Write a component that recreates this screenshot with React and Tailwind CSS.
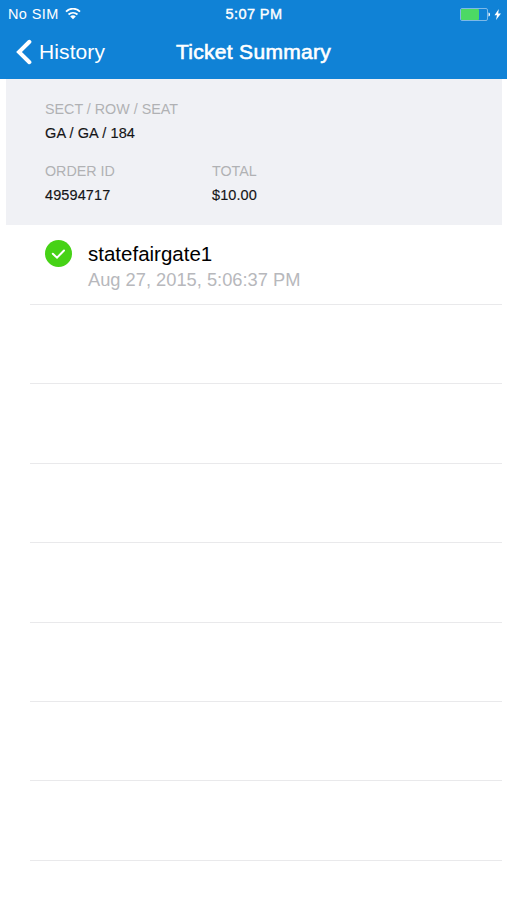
import React from 'react';

const emptyRows = [1, 2, 3, 4, 5, 6, 7];

const WifiIcon = () => (
  <svg className="w-4 h-3" viewBox="0 0 16 12" fill="none" stroke="white" strokeWidth="1.8">
    <path d="M1 3.7C5 -0.3 11 -0.3 15 3.7" />
    <path d="M3.5 6.5C6.1 4.2 9.9 4.2 12.5 6.5" />
    <path d="M5.2 8.4L8 11.2L10.8 8.4C9.2 7 6.8 7 5.2 8.4Z" fill="white" stroke="none" />
  </svg>
);

const BatteryIcon = () => (
  <svg className="w-[42px] h-[13px]" viewBox="0 0 42 13">
    <rect x="0.5" y="0.5" width="27" height="12" rx="1.5" fill="none" stroke="#7db9e8" />
    <rect x="1" y="1" width="18" height="11" rx="1" fill="#4cd964" />
    <path d="M28.5 4.5C30.5 5 30.5 8 28.5 8.5Z" fill="white" />
    <path d="M38.8 1L34.5 7.2H37L36 12L41 5.4H38.2Z" fill="white" />
  </svg>
);

const Field = ({ label, value }) => (
  <div>
    <p className="text-[#b0b1b4] text-[14.3px] leading-4">{label}</p>
    <p className="text-[#151517] text-[14.5px] leading-4 mt-2 tracking-[0.1px] [-webkit-text-stroke:0.15px]">{value}</p>
  </div>
);

const App = () => {
  return (
    <div className="w-[507px] h-[900px] bg-white overflow-hidden font-['Liberation_Sans',Arial,sans-serif]">
      <header className="h-[79px] bg-[#1082d6] text-white">
        <div className="h-7 grid grid-cols-[165px_162px_1fr] items-center pl-2 pr-[5px] text-[14.5px]">
          <div className="flex items-center gap-1.5">
            <span className="leading-5 tracking-[0.4px]">No SIM</span>
            <WifiIcon />
          </div>
          <span className="leading-5 text-center tracking-[0.4px] [-webkit-text-stroke:0.4px]">5:07 PM</span>
          <div className="flex justify-end">
            <BatteryIcon />
          </div>
        </div>
        <div className="h-12 grid grid-cols-[160px_1fr_160px] items-center">
          <button className="flex items-center gap-[7px] pl-4 text-[21px]">
            <svg className="w-4 h-[26px]" viewBox="0 0 16 26" fill="none" stroke="white" strokeWidth="4" strokeLinecap="round">
              <path d="M13.4 2.8L3 13L13.4 23.2" />
            </svg>
            <span className="tracking-[0.1px]">History</span>
          </button>
          <h1 className="text-center text-[21px] whitespace-nowrap tracking-[0.3px] [-webkit-text-stroke:0.6px]">Ticket Summary</h1>
        </div>
      </header>

      <section className="h-[146px] ml-1.5 mr-[5px] pl-[39px] pt-[22px] bg-[#f0f1f5]">
        <Field label="SECT / ROW / SEAT" value="GA / GA / 184" />
        <div className="grid grid-cols-[167px_1fr] mt-[22px]">
          <Field label="ORDER ID" value="49594717" />
          <Field label="TOTAL" value="$10.00" />
        </div>
      </section>

      <ul className="ml-[30px] mr-[5px]">
        <li className="h-20 flex pl-[15px] pt-[15px] border-b border-[#e9e9eb]">
          <svg className="w-[27px] h-[27px]" viewBox="0 0 27 27">
            <circle cx="13.5" cy="13.5" r="13.5" fill="#46d216" />
            <path d="M7.8 13.8L12 17.7L19 10.5" fill="none" stroke="white" strokeWidth="2" strokeLinecap="round" />
          </svg>
          <div className="ml-4">
            <p className="text-[20.5px] leading-7 text-black">statefairgate1</p>
            <p className="text-[18.3px] leading-6 text-[#b7b8bc]">Aug 27, 2015, 5:06:37 PM</p>
          </div>
        </li>
        {emptyRows.map((row) => (
          <li key={row} className="h-[79.4px] border-b border-[#e9e9eb]" />
        ))}
      </ul>
    </div>
  );
};

export default App;
